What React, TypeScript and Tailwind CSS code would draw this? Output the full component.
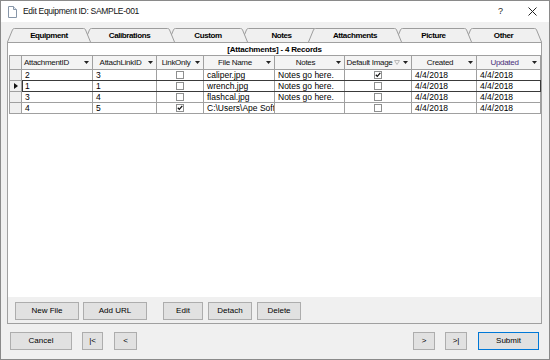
import React from 'react';

type Row = {
  id: string;
  link: string;
  linkOnly: boolean;
  file: string;
  notes: string;
  def: boolean;
  created: string;
  updated: string;
};

const rows: Row[] = [
  { id: '2', link: '3', linkOnly: false, file: 'caliper.jpg', notes: 'Notes go here.', def: true, created: '4/4/2018', updated: '4/4/2018' },
  { id: '1', link: '1', linkOnly: false, file: 'wrench.jpg', notes: 'Notes go here.', def: false, created: '4/4/2018', updated: '4/4/2018' },
  { id: '3', link: '4', linkOnly: false, file: 'flashcal.jpg', notes: 'Notes go here.', def: false, created: '4/4/2018', updated: '4/4/2018' },
  { id: '4', link: '5', linkOnly: true, file: 'C:\\Users\\Ape Soft', notes: '', def: false, created: '4/4/2018', updated: '4/4/2018' },
];

const tabs = [
  { label: 'Equipment', w: 84, cls: 'w-[84px] z-[7]' },
  { label: 'Calibrations', w: 91, cls: 'w-[91px] -ml-[7px] z-[6]' },
  { label: 'Custom', w: 80, cls: 'w-[80px] -ml-[7px] z-[5]' },
  { label: 'Notes', w: 81, cls: 'w-[81px] -ml-[7px] z-[4]' },
  { label: 'Attachments', w: 94, cls: 'w-[94px] -ml-[14px] z-[10]' },
  { label: 'Picture', w: 77, cls: 'w-[77px] -ml-[7px] z-[2]' },
  { label: 'Other', w: 77, cls: 'w-[77px] -ml-[7px] z-[1]' },
];

const columns = [
  { name: 'AttachmentID', w: 'w-[71px]', left: true },
  { name: 'AttachLinkID', w: 'w-[64px]' },
  { name: 'LinkOnly', w: 'w-[47px]' },
  { name: 'File Name', w: 'w-[71px]' },
  { name: 'Notes', w: 'w-[70px]' },
  { name: 'Default Image', w: 'w-[67px]', filter: true },
  { name: 'Created', w: 'w-[65px]' },
  { name: 'Updated', w: 'w-[64px]', purple: true },
];

function Tab({ label, w, cls }: { label: string; w: number; cls: string }) {
  const outline = `M0.5,14 L5.5,1.8 Q6,0.5 7.5,0.5 L${w - 7.5},0.5 Q${w - 6},0.5 ${w - 5.5},1.8 L${w - 0.5},14`;
  return (
    <div className={`relative h-[14px] shrink-0 ${cls}`}>
      <svg className="absolute inset-0" width={w} height={14}>
        <path d={outline + ' Z'} fill="#f0f0f0" />
        <path d={outline} fill="none" stroke="#9c9c9c" />
      </svg>
      <span className="relative block text-center text-[8px] font-bold leading-[15px] tracking-[-0.4px] text-black">
        {label}
      </span>
    </div>
  );
}

function Check({ on }: { on: boolean }) {
  return (
    <svg width="8" height="8" viewBox="0 0 8 8">
      <rect x="0.5" y="0.5" width="7" height="7" fill="#fff" stroke="#8e8f8f" />
      {on && <path d="M1.8,3.8 L3.3,5.4 L6.3,1.9" fill="none" stroke="#111" strokeWidth="1.3" />}
    </svg>
  );
}

function DropArrow() {
  return (
    <svg width="5" height="3" viewBox="0 0 5 3" className="shrink-0">
      <path d="M0,0 H5 L2.5,3 Z" fill="#222" />
    </svg>
  );
}

function Btn({ w, children, primary }: { w: string; children: React.ReactNode; primary?: boolean }) {
  return (
    <button
      className={`h-[18px] ${w} shrink-0 bg-[#e1e1e1] text-[8px] leading-none text-black ${
        primary ? 'border-[1.5px] border-[#0078d7]' : 'border border-[#adadad]'
      }`}
    >
      {children}
    </button>
  );
}

export default function App() {
  return (
    <div className="flex h-[360px] w-[550px] flex-col border border-[#8a8a8a] bg-[#f0f0f0] font-['Liberation_Sans',Arial,sans-serif] text-black">
      {/* title bar */}
      <div className="flex h-[21px] shrink-0 items-center bg-white">
        <svg width="9" height="12" viewBox="0 0 9 12" className="ml-[7px] mt-[1px]">
          <path d="M0.5,0.5 H5.5 L8.5,3.5 V11.5 H0.5 Z" fill="#fff" stroke="#8796a8" />
          <path d="M5.5,0.5 V3.5 H8.5" fill="#e4ebf3" stroke="#8796a8" />
        </svg>
        <span className="ml-[6px] text-[8.5px] tracking-[-0.3px] text-[#111]">Edit Equipment ID: SAMPLE-001</span>
        <div className="flex-1" />
        <span className="mr-[25px] text-[9px] text-[#222]">?</span>
        <svg width="9" height="9" viewBox="0 0 9 9" className="mr-[12px]">
          <path d="M0.5,0.5 L8.5,8.5 M8.5,0.5 L0.5,8.5" stroke="#222" strokeWidth="1" />
        </svg>
      </div>

      {/* tabs */}
      <div className="ml-[6px] mr-[7px] mt-[6px] flex flex-col">
        <div className="flex h-[14px]">
          {tabs.map((t) => (
            <Tab key={t.label} {...t} />
          ))}
        </div>

        {/* tab panel */}
        <div className="flex h-[282px] flex-col border border-[#a0a0a0]">
          <div className="flex flex-1 flex-col bg-white">
            <div className="h-[12px] pt-[1px] text-center text-[8px] font-bold leading-[11px] tracking-[-0.2px]">
              [Attachments] - 4 Records
            </div>

            <div className="ml-[1px] w-[532px] border-l border-t border-[#a0a0a0] text-[8px]">
              {/* header */}
              <div className="flex h-[14px]">
                <div className="w-[12px] shrink-0 border-b border-r border-[#a0a0a0] bg-[#f0f0f0]" />
                {columns.map((c) => (
                  <div
                    key={c.name}
                    className={`flex ${c.w} shrink-0 items-center border-b border-r border-[#a0a0a0] bg-[#f4f4f4] pr-[3px]`}
                  >
                    <span
                      className={`flex-1 whitespace-nowrap tracking-[-0.3px] ${c.left ? 'pl-[2px] text-left' : 'text-center'} ${
                        c.purple ? 'text-[#4a2f7a]' : 'text-[#111]'
                      }`}
                    >
                      {c.name}
                    </span>
                    {c.filter && (
                      <svg width="6" height="5" viewBox="0 0 6 5" className="mr-[3px] shrink-0">
                        <path d="M0.5,0.5 H5.5 L3,4.5 Z" fill="none" stroke="#b8b8b8" />
                      </svg>
                    )}
                    <DropArrow />
                  </div>
                ))}
              </div>

              {/* rows */}
              {rows.map((r, i) => {
                const sel = i === 1;
                const cell =
                  'h-full shrink-0 overflow-hidden whitespace-nowrap border-b border-r border-[#a0a0a0] pl-[3px] text-[8.5px] leading-[10px]';
                const box = 'flex h-full shrink-0 items-center justify-center border-b border-r border-[#a0a0a0]';
                return (
                  <div key={i} className="relative flex h-[11px]">
                    <div className="flex h-full w-[12px] shrink-0 items-center justify-center border-b border-r border-[#a0a0a0] bg-[#f0f0f0]">
                      {sel && (
                        <svg width="4" height="6" viewBox="0 0 4 6">
                          <path d="M0,0 L4,3 L0,6 Z" fill="#111" />
                        </svg>
                      )}
                    </div>
                    <div className={`${cell} w-[71px]`}>{r.id}</div>
                    <div className={`${cell} w-[64px]`}>{r.link}</div>
                    <div className={`${box} w-[47px]`}>
                      <Check on={r.linkOnly} />
                    </div>
                    <div className={`${cell} w-[71px]`}>{r.file}</div>
                    <div className={`${cell} w-[70px]`}>{r.notes}</div>
                    <div className={`${box} w-[67px]`}>
                      <Check on={r.def} />
                    </div>
                    <div className={`${cell} w-[65px]`}>{r.created}</div>
                    <div className={`${cell} w-[64px]`}>{r.updated}</div>
                    {sel && (
                      <div className="pointer-events-none absolute -top-px bottom-0 left-[12px] right-0 border border-[#3a3a3a]" />
                    )}
                  </div>
                );
              })}
            </div>
          </div>

          {/* panel buttons */}
          <div className="flex h-[26px] shrink-0 items-start pl-[7px] pt-[5px]">
            <Btn w="w-[64px]">New File</Btn>
            <div className="w-[4px]" />
            <Btn w="w-[64px]">Add URL</Btn>
            <div className="w-[16px]" />
            <Btn w="w-[40px]">Edit</Btn>
            <div className="w-[5px]" />
            <Btn w="w-[44px]">Detach</Btn>
            <div className="w-[5px]" />
            <Btn w="w-[44px]">Delete</Btn>
          </div>
        </div>
      </div>

      {/* dialog buttons */}
      <div className="mt-[8px] flex items-center pl-[9px] pr-[10px]">
        <Btn w="w-[62px]">Cancel</Btn>
        <div className="w-[10px]" />
        <Btn w="w-[21px]">|&lt;</Btn>
        <div className="w-[11px]" />
        <Btn w="w-[23px]">&lt;</Btn>
        <div className="flex-1" />
        <Btn w="w-[22px]">&gt;</Btn>
        <div className="w-[10px]" />
        <Btn w="w-[22px]">&gt;|</Btn>
        <div className="w-[11px]" />
        <Btn w="w-[61px]" primary>
          Submit
        </Btn>
      </div>
    </div>
  );
}
